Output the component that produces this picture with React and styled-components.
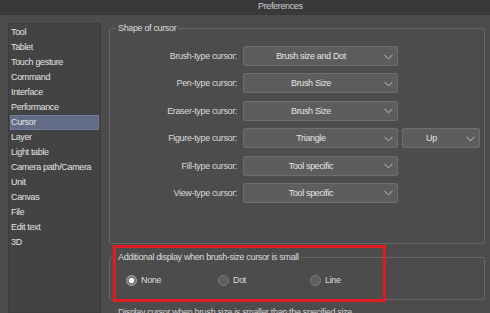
import React from 'react'
import styled, { createGlobalStyle } from 'styled-components';

const GlobalStyle = createGlobalStyle`
  html, body {
    margin: 0;
    padding: 0;
    background: #4c4c4c;
  }
`;

const categories = [
  'Tool', 'Tablet', 'Touch gesture', 'Command', 'Interface', 'Performance', 'Cursor',
  'Layer', 'Light table', 'Camera path/Camera', 'Unit', 'Canvas', 'File', 'Edit text', '3D',
];

// 形状の設定行（2つ目のドロップダウンは Figure のみ）
const cursorRows = [
  { label: 'Brush-type cursor:', value: 'Brush size and Dot' },
  { label: 'Pen-type cursor:', value: 'Brush Size' },
  { label: 'Eraser-type cursor:', value: 'Brush Size' },
  { label: 'Figure-type cursor:', value: 'Triangle', extra: 'Up' },
  { label: 'Fill-type cursor:', value: 'Tool specific' },
  { label: 'View-type cursor:', value: 'Tool specific' },
];

const radios = [
  { label: 'None', checked: true },
  { label: 'Dot' },
  { label: 'Line' },
];

const Chevron = () => (
  <SChevron width="9" height="6" viewBox="0 0 9 6">
    <polyline points="0.5,0.8 4.5,4.8 8.5,0.8" fill="none" stroke="#c4c4c4" strokeWidth="1" />
  </SChevron>
);

const Dropdown = ({ value, wide }) => (
  <SSelect $wide={wide}>
    <SSelectText>{value}</SSelectText>
    <Chevron />
  </SSelect>
);

export default function App() {
  return (
    <>
      <GlobalStyle />
      <SWindow>
        <STitleBar>Preferences</STitleBar>
        <SBody>
          <SSidebar>
            {categories.map((c) => (
              <SItem key={c} $active={c === 'Cursor'}>{c}</SItem>
            ))}
          </SSidebar>
          <SMain>
            <SGroup>
              <SLegend>Shape of cursor</SLegend>
              <SGrid>
                {cursorRows.map((r) => (
                  <React.Fragment key={r.label}>
                    <SLabel>{r.label}</SLabel>
                    <Dropdown value={r.value} wide />
                    {r.extra ? <Dropdown value={r.extra} /> : <span />}
                  </React.Fragment>
                ))}
              </SGrid>
            </SGroup>
            <SGroup2>
              <SLegend>Additional display when brush-size cursor is small</SLegend>
              <SRadioRow>
                {radios.map((r) => (
                  <SRadioItem key={r.label}>
                    <SRadio $checked={r.checked} />
                    {r.label}
                  </SRadioItem>
                ))}
              </SRadioRow>
            </SGroup2>
            <SNote>Display cursor when brush size is smaller than the specified size</SNote>
          </SMain>
        </SBody>
        <SHighlight />
      </SWindow>
    </>
  )
};

const SWindow = styled.div`
  position: relative;
  width: 490px;
  height: 313px;
  overflow: hidden;
  background: #4c4c4c;
  display: flex;
  flex-direction: column;
  font-family: "Liberation Sans", Arial, sans-serif;
  font-size: 9px;
  letter-spacing: -0.35px;
  color: #dedede;
`;

const STitleBar = styled.div`
  height: 15px;
  flex: none;
  line-height: 13px;
  padding-left: 258px;
  background: #393939;
  color: #cdcdcd;
`;

const SBody = styled.div`
  flex: 1;
  display: flex;
  gap: 8px;
  padding: 8px 5px 0 8px;
  min-height: 0;
`;

const SSidebar = styled.div`
  width: 93px;
  flex: none;
  box-sizing: border-box;
  background: #434343;
  border: 1px solid #3d3d3d;
  padding: 1px 1px 0;
`;

const SItem = styled.div`
  height: 15px;
  line-height: 15px;
  padding-left: 1px;
  white-space: nowrap;
  color: #e2e2e2;
  background: ${(p) => (p.$active ? '#626c88' : 'transparent')};
  box-shadow: ${(p) => (p.$active ? 'inset 0 0 0 1px #727c98' : 'none')};
`;

const SMain = styled.div`
  flex: 1;
  display: flex;
  flex-direction: column;
`;

const SGroup = styled.fieldset`
  margin: 0;
  padding: 12px 0 40px;
  border: 1px solid #676767;
  border-radius: 2px;
  min-width: 0;
`;

const SGroup2 = styled(SGroup)`
  margin-top: 8px;
  padding: 11px 0 12px;
`;

const SLegend = styled.legend`
  margin-left: 6px;
  padding: 0 2px;
  line-height: 11px;
  color: #dcdcdc;
`;

const SGrid = styled.div`
  display: grid;
  grid-template-columns: 128px 156px 78px;
  grid-auto-rows: 20px;
  column-gap: 4px;
  row-gap: 7.4px;
`;

const SLabel = styled.div`
  text-align: right;
  align-self: center;
  padding-right: 1px;
  color: #dadada;
  white-space: nowrap;
`;

const SSelect = styled.div`
  display: flex;
  align-items: center;
  box-sizing: border-box;
  height: 20px;
  margin-left: ${(p) => (p.$wide ? '1px' : '0')};
  background: #5d5d5d;
  border: 1px solid #6e6e6e;
  border-radius: 2px;
  color: #e6e6e6;
`;

const SSelectText = styled.span`
  flex: 1;
  text-align: center;
  white-space: nowrap;
`;

const SChevron = styled.svg`
  flex: none;
  margin: 1px 4px 0 6px;
`;

const SRadioRow = styled.div`
  display: grid;
  grid-template-columns: repeat(3, 92px);
  height: 13px;
  padding-left: 16px;
  align-items: center;
`;

const SRadioItem = styled.div`
  display: flex;
  align-items: center;
  gap: 4px;
  color: #dcdcdc;
`;

const SRadio = styled.span`
  width: 11px;
  height: 11px;
  box-sizing: border-box;
  border-radius: 50%;
  border: 1px solid ${(p) => (p.$checked ? '#a8a8a8' : '#7c7c7c')};
  background: ${(p) => (p.$checked ? 'radial-gradient(circle, #ffffff 0 2.4px, #7a7a7a 2.9px)' : '#5e5e5e')};
`;

const SNote = styled.div`
  margin-top: 7px;
  padding-left: 9px;
  white-space: nowrap;
  color: #cfcfcf;
`;

const SHighlight = styled.div`
  position: absolute;
  left: 113px;
  top: 245px;
  width: 273px;
  height: 57px;
  box-sizing: border-box;
  border: 3px solid #e11b1f;
  pointer-events: none;
`;
